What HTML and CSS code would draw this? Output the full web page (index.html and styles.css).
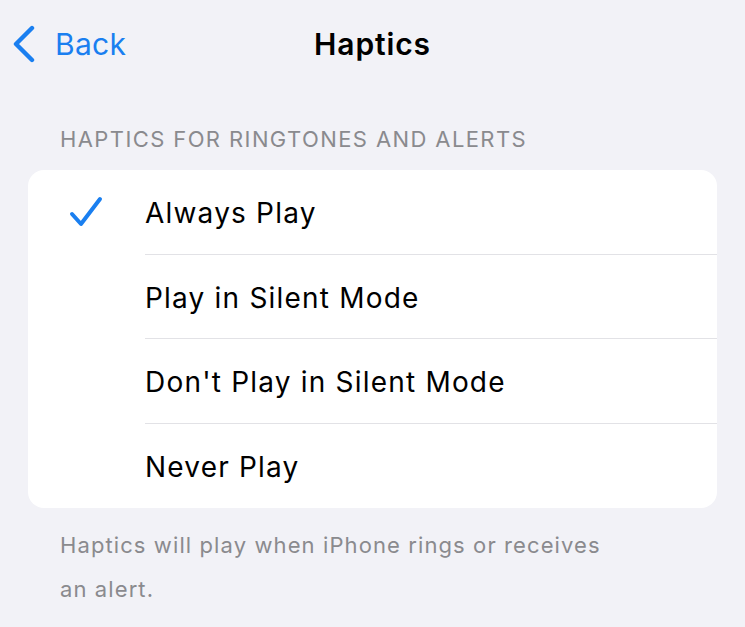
FILE: index.html
```html
<!DOCTYPE html>
<html>
<head>
<meta charset="utf-8">
<link rel="stylesheet" href="styles.css">
</head>
<body>
<div class="nav">
  <div class="back">
    <svg class="chev" width="28" height="38" viewBox="0 0 28 38"><path d="M22 3 L6 19 L22 35" fill="none" stroke="#1a7ff0" stroke-width="4.4" stroke-linecap="round" stroke-linejoin="round"/></svg>
    <span class="back-label">Back</span>
  </div>
  <div class="title">Haptics</div>
</div>
<div class="section-header">HAPTICS FOR RINGTONES AND ALERTS</div>
<div class="card">
  <div class="row">
    <div class="check"><svg width="34" height="32" viewBox="0 0 34 32"><path d="M3 18 L12 28 L31 3" fill="none" stroke="#1a7ff0" stroke-width="4" stroke-linecap="round" stroke-linejoin="round"/></svg></div>
    <div class="label">Always Play</div>
  </div>
  <div class="row">
    <div class="check"></div>
    <div class="label">Play in Silent Mode</div>
  </div>
  <div class="row">
    <div class="check"></div>
    <div class="label">Don't Play in Silent Mode</div>
  </div>
  <div class="row">
    <div class="check"></div>
    <div class="label">Never Play</div>
  </div>
</div>
<div class="footer">Haptics will play when iPhone rings or receives<br>an alert.</div>
</body>
</html>
```
FILE: styles.css
```css
html, body {
  margin: 0;
  padding: 0;
  background: #f2f2f7;
  font-family: Inter, "Noto Sans", sans-serif;
  width: 745px;
  height: 627px;
  overflow: hidden;
}
.nav {
  position: relative;
  height: 88px;
  display: flex;
  align-items: center;
}
.back {
  display: flex;
  align-items: center;
  padding-left: 10px;
  gap: 17px;
  color: #1a7ff0;
  font-size: 30px;
  margin-top: -1px;
}
.back-label {
  letter-spacing: 0.3px;
}
.title {
  position: absolute;
  left: 0;
  right: 0;
  top: 0;
  line-height: 88px;
  text-align: center;
  font-size: 30px;
  font-weight: 600;
  letter-spacing: 0.9px;
  color: #000;
  pointer-events: none;
}
.section-header {
  padding: 36px 0 0 60px;
  font-size: 22px;
  color: #8a8a8e;
  line-height: 30px;
  letter-spacing: 1.4px;
}
.card {
  margin: 16px 28px 0 28px;
  background: #fff;
  border-radius: 16px;
  overflow: hidden;
}
.row {
  display: flex;
  align-items: stretch;
  height: 84.5px;
}
.check {
  width: 117px;
  display: flex;
  align-items: center;
  justify-content: flex-start;
  padding-left: 41px;
  box-sizing: border-box;
}
.label {
  flex: 1;
  display: flex;
  align-items: center;
  padding-top: 3px;
  font-size: 28px;
  letter-spacing: 1.2px;
  color: #000;
  border-bottom: 1.5px solid #e2e2e6;
}
.row:last-child .label {
  border-bottom: none;
}
.footer {
  padding: 15px 0 0 60px;
  font-size: 22px;
  line-height: 44px;
  letter-spacing: 1.1px;
  color: #8a8a8e;
}
```
